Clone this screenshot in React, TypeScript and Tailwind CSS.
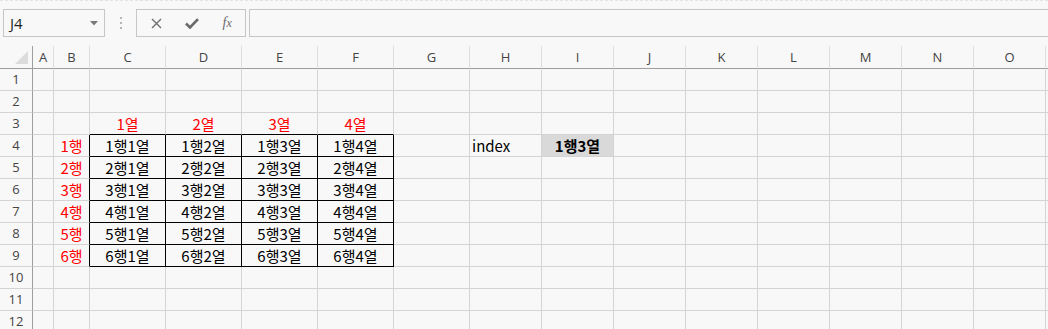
import React from 'react'

const cols = [
  { k: 'A', w: 21 },
  { k: 'B', w: 36 },
  { k: 'C', w: 76 },
  { k: 'D', w: 76 },
  { k: 'E', w: 76 },
  { k: 'F', w: 76 },
  { k: 'G', w: 76 },
  { k: 'H', w: 72 },
  { k: 'I', w: 72 },
  { k: 'J', w: 72 },
  { k: 'K', w: 72 },
  { k: 'L', w: 72 },
  { k: 'M', w: 72 },
  { k: 'N', w: 72 },
  { k: 'O', w: 72 },
]

const tableCols = ['C', 'D', 'E', 'F']
const rows = Array.from({ length: 12 }, (_, i) => i + 1)

type Cell = { text: string; red?: boolean; bold?: boolean; left?: boolean; fill?: boolean }

function cellAt(r: number, c: string): Cell | null {
  const ci = tableCols.indexOf(c)
  if (r === 3 && ci >= 0) return { text: `${ci + 1}열`, red: true }
  if (r >= 4 && r <= 9) {
    if (c === 'B') return { text: `${r - 3}행`, red: true }
    if (ci >= 0) return { text: `${r - 3}행${ci + 1}열` }
  }
  if (r === 4 && c === 'H') return { text: 'index', left: true }
  if (r === 4 && c === 'I') return { text: '1행3열', bold: true, fill: true }
  return null
}

const inTable = (r: number, c: string) => r >= 4 && r <= 9 && tableCols.includes(c)

function FormulaBar() {
  return (
    <div className="h-[46px] border-t border-dashed border-[#e3e3e3] flex items-start pt-[8px]">
      <div className="ml-[3px] w-[102px] h-[28px] border border-[#c6c6c6] flex items-center justify-between pl-[6px] pr-[6px]">
        <span className="text-[15px] text-[#262626] font-['Open_Sans',sans-serif]">J4</span>
        <svg width="8" height="5" viewBox="0 0 8 5"><path d="M0 0h8L4 4.5z" fill="#7a7a7a" /></svg>
      </div>
      <div className="w-[31px] h-[28px] flex flex-col items-center justify-center gap-[3px]">
        <span className="w-[2px] h-[2px] bg-[#b5b5b5]" />
        <span className="w-[2px] h-[2px] bg-[#b5b5b5]" />
        <span className="w-[2px] h-[2px] bg-[#b5b5b5]" />
      </div>
      <div className="w-[110px] h-[28px] border border-[#c6c6c6] flex items-center">
        <div className="w-[37px] flex justify-center pl-[2px]">
          <svg width="11" height="11" viewBox="0 0 11 11">
            <path d="M1 1L10 10M10 1L1 10" stroke="#6f6f6f" strokeWidth="1.4" />
          </svg>
        </div>
        <div className="w-[36px] flex justify-center">
          <svg width="14" height="11" viewBox="0 0 14 11">
            <path d="M1 5.5L5 9.5L13 1.2" stroke="#6a6a6a" strokeWidth="2.6" fill="none" />
          </svg>
        </div>
        <div className="w-[36px] flex justify-center">
          <span className="text-[14px] italic text-[#6a6a6a] font-['Liberation_Serif',serif] leading-none">
            f<span className="text-[12px]">x</span>
          </span>
        </div>
      </div>
      <div className="ml-[3px] flex-1 h-[28px] border-t border-b border-l border-[#c6c6c6]" />
    </div>
  )
}

export default function App() {
  return (
    <div className="w-[1048px] h-[329px] overflow-hidden bg-[#f8f8f8] font-['Open_Sans',sans-serif]">
      <FormulaBar />
      <div className="grid grid-cols-[33px_21px_36px_76px_76px_76px_76px_76px_72px_72px_72px_72px_72px_72px_72px_72px_1fr]">
        {/* header row */}
        <div className="h-[23px] border-r border-b border-[#9e9e9e] flex items-end justify-end pr-[4px] pb-[4px]">
          <svg width="13" height="13" viewBox="0 0 13 13"><path d="M13 0V13H0z" fill="#dcdcdc" /></svg>
        </div>
        {cols.map((c) => (
          <div
            key={c.k}
            className="h-[23px] border-r border-[#dedede] border-b border-b-[#9e9e9e] flex items-center justify-center text-[13px] text-[#444] pt-[1px]"
          >
            {c.k}
          </div>
        ))}
        <div className="h-[23px] border-b border-[#9e9e9e]" />

        {rows.map((r) => (
          <React.Fragment key={r}>
            <div className="h-[22px] border-r border-r-[#9e9e9e] border-b border-b-[#d4d4d4] flex items-center justify-center text-[13px] text-[#444]">
              {r}
            </div>
            {cols.map((c) => {
              const cell = cellAt(r, c.k)
              const blackR = inTable(r, c.k) || (c.k === 'B' && r >= 4 && r <= 9)
              const blackB = inTable(r, c.k) || (r === 3 && tableCols.includes(c.k))
              return (
                <div
                  key={c.k}
                  className={`h-[22px] border-r border-b flex items-center overflow-visible whitespace-nowrap font-['Noto_Sans_CJK_KR',sans-serif] text-[15px] leading-[20px] ${
                    blackR ? 'border-r-black' : 'border-r-[#d4d4d4]'
                  } ${blackB ? 'border-b-black' : 'border-b-[#d4d4d4]'} ${
                    cell?.left ? 'justify-start pl-[2px]' : 'justify-center'
                  } ${cell?.red ? 'text-[#ff0000]' : 'text-black'} ${cell?.bold ? 'font-bold' : ''} ${
                    cell?.fill ? 'bg-[#d9d9d9]' : ''
                  }`}
                >
                  {cell?.text}
                </div>
              )
            })}
            <div className="h-[22px] border-b border-[#d4d4d4]" />
          </React.Fragment>
        ))}
      </div>
    </div>
  )
}
